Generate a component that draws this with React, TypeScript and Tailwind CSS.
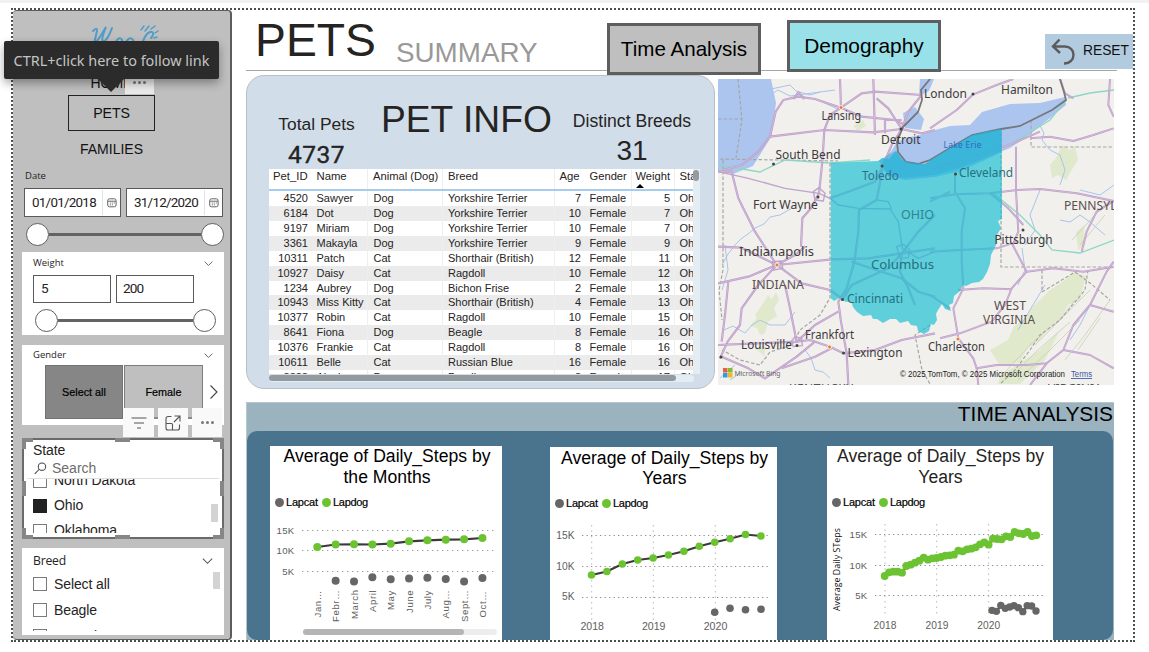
import React from "react";

type Row = [string, string, string, string, string, string, string];

const rows: Row[] = [
  ["4520", "Sawyer", "Dog", "Yorkshire Terrier", "7", "Female", "5"],
  ["6184", "Dot", "Dog", "Yorkshire Terrier", "10", "Female", "7"],
  ["9197", "Miriam", "Dog", "Yorkshire Terrier", "10", "Female", "7"],
  ["3361", "Makayla", "Dog", "Yorkshire Terrier", "9", "Female", "9"],
  ["10311", "Patch", "Cat", "Shorthair (British)", "12", "Female", "11"],
  ["10927", "Daisy", "Cat", "Ragdoll", "10", "Female", "12"],
  ["1234", "Aubrey", "Dog", "Bichon Frise", "2", "Female", "13"],
  ["10943", "Miss Kitty", "Cat", "Shorthair (British)", "4", "Female", "13"],
  ["10377", "Robin", "Cat", "Ragdoll", "10", "Female", "15"],
  ["8641", "Fiona", "Dog", "Beagle", "8", "Female", "16"],
  ["10376", "Frankie", "Cat", "Ragdoll", "8", "Female", "16"],
  ["10611", "Belle", "Cat", "Russian Blue", "16", "Female", "16"],
  ["8888", "Alexis", "Dog", "Poodle", "8", "Female", "17"],
];

const gridCols = "grid grid-cols-[43px_56px_75px_112px_30px_47px_43px_19px]";

function Chevron({ className }: { className?: string }) {
  return (
    <svg viewBox="0 0 14 8" className={className} fill="none" stroke="#555" strokeWidth="1.1">
      <path d="M2 1.5 7 6.5 12 1.5" />
    </svg>
  );
}

function Slider({ className }: { className: string }) {
  return (
    <div className={`flex items-center ${className}`}>
      <span className="size-[23px] shrink-0 rounded-full border-[1.5px] border-[#5f5f5f] bg-white" />
      <span className="h-[3px] flex-1 bg-[#636363]" />
      <span className="size-[23px] shrink-0 rounded-full border-[1.5px] border-[#5f5f5f] bg-white" />
    </div>
  );
}

function DateBox({ value }: { value: string }) {
  return (
    <div className="flex h-[29px] w-[97px] items-center border border-[#5a5a5a] bg-white">
      <span className="w-[78px] border-r border-[#e4e4e4] pl-[7px] font-['Roboto',sans-serif] text-[13.4px] leading-[25px] tracking-[-0.73px] text-[#252423]">
        {value}
      </span>
      <svg viewBox="0 0 10 10" className="ml-[4px] size-[10px]" fill="none" stroke="#666" strokeWidth="1">
        <rect x="0.7" y="0.8" width="8.4" height="8" rx="1.8" />
        <path d="M1 3.2h8M2.8 5h1m1 0h1m1 0h1M2.8 6.8h1m1 0h1" />
      </svg>
    </div>
  );
}

function Check({ label, checked }: { label: string; checked?: boolean }) {
  return (
    <div className="flex h-full items-center">
      <span className={`size-[14px] border ${checked ? "border-[#222] bg-[#222]" : "border-[#7a7a7a] bg-white"}`} />
      <span className="ml-[7px] whitespace-nowrap text-[14px] tracking-[-0.1px] text-[#252423]">{label}</span>
    </div>
  );
}

function Sidebar() {
  return (
    <aside className="relative flex h-[630px] w-[219px] shrink-0 flex-col rounded-[4px] border-r-2 border-t border-b border-[#5c5c5c] bg-[#bfbfbf] pl-[9px]">
      <svg viewBox="0 0 80 24" className="ml-[68px] mt-[14px] h-[24px] w-[80px]" fill="none" stroke="#4f9dcb" strokeLinecap="round">
        <path d="M3 6c3-3 4-3 4 0L4 19c5-4 8-11 12-17-3 7-5 13-3 15 5-2 7-9 9-14" strokeWidth="2" />
        <path d="M27 19c-3-4 4-8 5-4s-4 6-5 3M37 19c-2-4 4-8 6-4s-4 6-6 3M52 20c1-5 4-12 8-13s4 3 1 6" strokeWidth="2" />
        <path d="M51 5l3-4M55 6l4-5M61 4l4-3M65 8l3-2M64 13l3-1" strokeWidth="1.5" />
      </svg>
      <nav className="mt-[22px] flex flex-col items-start text-[14px] text-[#111]">
        <div className="ml-[46px] flex h-[24px] w-[87px] items-center justify-center">HOME</div>
        <div className="ml-[46px] flex h-[36px] w-[87px] items-center justify-center border border-[#222] pt-px text-[14.2px] tracking-[-0.1px]">PETS</div>
        <div className="ml-[46px] flex h-[36px] w-[87px] items-center justify-center text-[14px]">FAMILIES</div>
      </nav>
      <div className="ml-[3px] mt-[1px] h-[16px] font-['Open_Sans',sans-serif] text-[9.5px] leading-[16px] text-[#252423]">Date</div>
      <div className="ml-[2px] mt-[4px] flex gap-[5px]">
        <DateBox value="01/01/2018" />
        <DateBox value="31/12/2020" />
      </div>
      <Slider className="ml-[4px] mt-[6px] w-[198px]" />

      <section className="mt-[6px] h-[83px] w-[202px] bg-white">
        <div className="flex h-[23px] items-center pl-[11px] font-['Open_Sans',sans-serif] text-[9.5px] text-[#252423]">
          Weight
          <Chevron className="ml-auto mr-[10px] h-[7px] w-[11px]" />
        </div>
        <div className="ml-[11px] flex gap-[5px] font-['Roboto',sans-serif] text-[13.6px] tracking-[-0.9px] text-[#252423]">
          <div className="h-[28px] w-[78px] border border-[#5a5a5a] pl-[7px] leading-[25px]">5</div>
          <div className="h-[28px] w-[78px] border border-[#5a5a5a] pl-[6px] leading-[25px]">200</div>
        </div>
        <Slider className="ml-[13px] mt-[6px] w-[181px]" />
      </section>

      <section className="mt-[10px] h-[80px] w-[202px] bg-white">
        <div className="flex h-[20px] items-center pl-[11px] font-['Open_Sans',sans-serif] text-[9.5px] text-[#252423]">
          Gender
          <Chevron className="ml-auto mr-[10px] h-[7px] w-[11px]" />
        </div>
        <div className="ml-[23px] flex text-[10.8px] text-black [-webkit-text-stroke:0.2px_black]">
          <div className="flex h-[54px] w-[78px] items-center justify-center border border-[#737373] bg-[#868686]">Select all</div>
          <div className="ml-[1px] flex h-[54px] w-[79px] items-center justify-center border border-[#7d7d7d] bg-[#bfbfbf]">Female</div>
          <svg viewBox="0 0 10 16" className="ml-[6px] mt-[19px] h-[16px] w-[10px]" fill="none" stroke="#444" strokeWidth="1.1">
            <path d="M1.5 1.5 8 8 1.5 14.5" />
          </svg>
        </div>
      </section>

      <section className="relative mt-[13px] h-[101px] w-[202px] border-2 border-[#6a6a6a] bg-white">
        <div className="h-[19px] pl-[9px] text-[14px] leading-[21px] tracking-[-0.1px] text-[#252423]">State</div>
        <div className="mx-[3px] flex h-[20px] items-center border-b border-[#dedede] pl-[7px] text-[14px] text-[#6d6d6d]">
          <svg viewBox="0 0 14 14" className="mr-[5px] size-[13px]" fill="none" stroke="#444" strokeWidth="1.1">
            <circle cx="8.6" cy="5" r="4" />
            <path d="M5.7 7.8 0.8 12.8" />
          </svg>
          Search
        </div>
        <div className="flex h-[54px] overflow-hidden pl-[9px]">
          <div className="-mt-[11px] flex-1">
            <div className="h-[25px]"><Check label="North Dakota" /></div>
            <div className="h-[25px]"><Check label="Ohio" checked /></div>
            <div className="h-[25px]"><Check label="Oklahoma" /></div>
          </div>
          <span className="mr-[4px] mt-[25px] h-[18px] w-[7px] bg-[#d3d3d3]" />
        </div>
        <svg viewBox="0 0 202 101" className="absolute -left-[2px] -top-[2px] h-[101px] w-[202px]" fill="none" stroke="#868686" strokeWidth="4">
          <path d="M11 2H2V11M191 2h9V11M11 99H2V90M191 99h9V90M93 2h15M93 99h15M2 43v15M200 43v15" />
        </svg>
      </section>

      <section className="mt-[9px] h-[87px] w-[202px] overflow-hidden bg-white">
        <div className="flex h-[24px] items-center pl-[11px] pt-[2px] font-['Open_Sans',sans-serif] text-[12.2px] tracking-[-0.2px] text-[#252423]">
          Breed
          <Chevron className="ml-auto mr-[10px] h-[8px] w-[13px]" />
        </div>
        <div className="flex h-[59px] overflow-hidden pl-[11px]">
          <div className="-mt-[1px] flex-1">
            <div className="h-[26px]"><Check label="Select all" /></div>
            <div className="h-[26px]"><Check label="Beagle" /></div>
            <div className="h-[26px]"><Check label="Bengal" /></div>
          </div>
          <span className="mr-[4px] mt-[0px] h-[17px] w-[7px] bg-[#d3d3d3]" />
        </div>
      </section>

      <div className="absolute left-[110px] top-[397px] flex">
        <span className="flex h-[29px] w-[31px] items-center justify-center bg-[#f9f9f9]">
          <svg viewBox="0 0 16 12" className="h-[12px] w-[16px]" stroke="#555" strokeWidth="1.2">
            <path d="M0.5 1h15M3 6h10M6 11h4" />
          </svg>
        </span>
        <span className="mt-[9px] h-[2px] w-[4px] bg-[#8b8b8b]" />
        <span className="flex h-[29px] w-[30px] items-center justify-center bg-[#f9f9f9]">
          <svg viewBox="0 0 16 16" className="size-[16px]" fill="none" stroke="#555" strokeWidth="1.1">
            <path d="M6.5 1.5H3a2 2 0 0 0-2 2V13a2 2 0 0 0 2 2h9.500a2 2 0 0 0 2-2V9.500M9.500 1H15v5.500M15 1 9 7M1 8.500h5.500a1 1 0 0 1 1 1V15" />
          </svg>
        </span>
        <span className="mt-[9px] h-[2px] w-[4px] bg-[#8b8b8b]" />
        <span className="flex h-[29px] w-[30px] items-center justify-center gap-[2px] bg-[#f9f9f9]">
          <i className="size-[3px] rounded-full bg-[#777]" />
          <i className="size-[3px] rounded-full bg-[#777]" />
          <i className="size-[3px] rounded-full bg-[#777]" />
        </span>
      </div>
      <div className="absolute left-[112px] top-[64px] flex h-[19px] w-[29px] items-center justify-center gap-[2px] bg-[#eaeaea] pb-[5px]">
        <i className="size-[3px] rounded-full bg-[#777]" />
        <i className="size-[3px] rounded-full bg-[#777]" />
        <i className="size-[3px] rounded-full bg-[#777]" />
      </div>
    </aside>
  );
}

function Header() {
  return (
    <header className="flex h-[61px] w-[887px] items-start bg-[linear-gradient(#a6a6a6,#a6a6a6)] bg-[length:871px_1px] bg-[position:left_bottom] bg-no-repeat">
      <h1 className="w-[149px] shrink-0 pl-[9px] text-[46.3px] leading-[61px] text-[#252423]">PETS</h1>
      <div className="mt-[23px] w-[212px] shrink-0 pl-[1px] text-[27.8px] leading-[40px] text-[#999]">SUMMARY</div>
      <div className="mt-[13px] flex h-[52px] w-[154px] shrink-0 items-center justify-center border-[3px] border-[#5e5e5e] bg-[#bfbfbf] text-[20.6px] text-black">
        Time Analysis
      </div>
      <div className="ml-[26px] mt-[10px] flex h-[52px] w-[154px] shrink-0 items-center justify-center border-[3px] border-[#5e5e5e] bg-[#99e1e9] pb-px text-[20.9px] text-black">
        Demography
      </div>
      <div className="ml-[104px] mt-[24px] flex h-[35px] w-[88px] shrink-0 items-center bg-[#b3cbdf] text-[13.8px] text-[#111]">
        <svg viewBox="0 0 24 27" className="ml-[6px] mr-[8px] h-[27px] w-[24px]" fill="none" stroke="#5c5c5c" strokeWidth="2.4">
          <path d="M8.500 1.500 2 8.500 9 15M2 8.500H14c5 0 8.500 3.500 8.500 8.300S19 25.500 13 25.500" />
        </svg>
        RESET
      </div>
    </header>
  );
}

function PetInfo() {
  return (
    <section className="h-[314px] w-[469px] rounded-[18px] border border-[#b9bfc4] bg-[#d1dee9] pl-[22px]">
      <div className="flex h-[93px] items-start text-[#252423]">
        <div className="w-[95px] pt-[38px] text-center">
          <div className="text-[17.4px] leading-[20px]">Total Pets</div>
          <div className="mt-[8px] font-['Roboto',sans-serif] text-[24.5px] leading-[26px] tracking-[0.5px] [-webkit-text-stroke:0.4px_#252423]">4737</div>
        </div>
        <div className="ml-[17px] mt-[22px] w-[178px] whitespace-nowrap text-[37.2px] leading-[42px]">PET INFO</div>
        <div className="ml-[5px] w-[136px] pt-[35px] text-center">
          <div className="text-[17.6px] leading-[20px]">Distinct Breeds</div>
          <div className="mt-[7px] text-[28px] leading-[26px]">31</div>
        </div>
      </div>
      <div className="flex h-[205px] w-[431px]">
        <div className="relative w-[425px] overflow-hidden bg-white text-[11px] leading-[15px] text-[#252423]">
          <div className={`${gridCols} h-[22px] border-b-2 border-[#a6cdf0]`}>
            <span className="whitespace-nowrap pl-[4px] text-[11.3px]">Pet_ID</span>
            <span className="border-r border-[#eee] pl-[4.5px] text-[11.3px]">Name</span>
            <span className="whitespace-nowrap border-r border-[#eee] pl-[5px] text-[11.2px]">Animal (Dog)</span>
            <span className="border-r border-[#eee] pl-[5px] text-[11.3px]">Breed</span>
            <span className="pr-[5.5px] text-right text-[11.3px]">Age</span>
            <span className="border-r border-[#eee] pl-[4.5px] text-[11.2px]">Gender</span>
            <span className="relative border-r border-[#eee] pr-[4px] text-right text-[11.2px]">
              Weight
              <i className="absolute left-[4px] top-[15px] border-x-[4px] border-b-[4px] border-x-transparent border-b-black" />
            </span>
            <span className="overflow-hidden pl-[4.5px] text-[11.3px]">State</span>
          </div>
          {rows.map((r, i) => (
            <div key={r[0]} className={`${gridCols} h-[14.93px] whitespace-nowrap ${i % 2 ? "bg-[#ebebeb]" : "bg-white"}`}>
              <span className="pr-[4px] text-right">{r[0]}</span>
              <span className="border-r border-[#eee] pl-[4.5px]">{r[1]}</span>
              <span className="border-r border-[#eee] pl-[5.5px]">{r[2]}</span>
              <span className="border-r border-[#eee] pl-[5px]">{r[3]}</span>
              <span className="pr-[4px] text-right">{r[4]}</span>
              <span className="border-r border-[#eee] pl-[4.5px]">{r[5]}</span>
              <span className="border-r border-[#eee] pr-[4px] text-right">{r[6]}</span>
              <span className="overflow-hidden pl-[4.5px]">Ohio</span>
            </div>
          ))}
        </div>
        <div className="w-[7px] bg-[#e5edf4]">
          <div className="mt-px h-[11px] w-[6px] rounded-full bg-[#979b9f]" />
        </div>
      </div>
      <div className="mt-px h-[7px] w-[425px] rounded-full bg-[#e5edf4]">
        <div className="h-[6px] w-[407px] rounded-full bg-[#949b9f]" />
      </div>
    </section>
  );
}

const westRoads = [
  "M25 285 80 270 130 230 165 185 182 110 205 75 250 65 300 72 378 98 440 55 480 50 620 60",
  "M235 72 250 52 268 72M375 12 378 98 345 120 328 165 322 260 312 355 288 400 262 430 258 515",
  "M165 185 328 165 475 172 560 162M378 98 440 125 540 135 570 150M475 12 480 180",
  "M485 70 520 100 560 162 530 210 505 270 485 375 432 405 430 470 418 560 395 640 370 680 378 740 395 835 400 930",
  "M620 60 580 110 560 162M10 290 50 290 70 370 120 470 185 570 240 540 270 515",
  "M9 515 80 518 185 570 350 553 460 550 560 535 660 520M9 625 100 605 185 570 260 625 345 645 380 670",
  "M185 570 130 630 80 700 75 750 38 800 15 850M40 620 30 720 20 800M210 630 225 700 245 800 285 795 345 815 385 835",
  "M9 810 120 805 245 800 300 750 370 710M20 845 100 880 150 910 245 845 300 800M200 880 300 845 350 820 M385 835 480 825 560 795 660 775",
  "M385 670 410 630 520 580 560 535 610 470 660 420M410 560 500 590 560 610 610 650 660 665",
  "M345 370 400 350 480 320 505 270M560 162 620 175 660 165M510 175V135H560M560 535 555 590 580 640 600 690",
];

const thinWestRoads = [
  "M9 290 100 310 210 340 312 355 345 370 370 390 432 400 525 402 550 440 562 520 610 550 660 530",
  "M545 515 565 508 585 525 580 548 555 550ZM485 375 520 380 530 402M240 785 260 790 262 812 235 815 228 800ZM172 560 200 558 203 580 175 585ZM295 350 312 338 330 355 325 378 300 375Z",
];

const eastRoads = [
  "M0 160 80 105 130 58 200 30 250 12M390 12 405 55 430 70M300 190 360 185 430 198 490 180 551 160",
  "M0 280 75 265 160 235 250 205 330 170M258 215 258 345 262 420 265 470 248 510 290 590",
  "M0 370 75 358 180 355 262 345 330 342 440 355 551 378M0 380 60 350M75 300 75 350 105 400 95 470 95 560 100 640",
  "M180 355 235 400 280 450M0 530 90 525 200 520 262 500M290 590 370 580 460 590 551 575",
  "M290 590 245 640 225 690 185 740 90 775 30 790M100 640 70 700 85 790 130 850 140 880 200 870 290 870 350 865 400 825 430 750 480 690 530 590 551 560",
  "M480 690 551 710M400 825 480 840 551 880M85 645 160 640 245 643M551 378 500 410 470 470 455 530M140 880 145 930M540 12 535 90 551 125M350 865 300 930M0 660 60 700",
];

function MapPanel() {
  return (
    <svg viewBox="718 79 396 306" className="ml-[3px] mt-[4px] h-[306px] w-[396px] shrink-0" fontFamily="'Noto Sans', 'Open Sans', sans-serif">
      <rect x="718" y="79" width="396" height="306" fill="#f1f0ed" />
      <g fill="#d9e6bd" opacity=".65">
        <path d="M762 305 768 295 772 299 776 292 779 300 774 308 777 316 768 322 765 333 760 335 757 328 750 326 757 318 755 315Z M853 126 863 120 866 126 858 131Z" />
        <path d="M1050 165 1056 158 1062 145 1070 150 1075 146 1078 160 1073 168 1066 180 1058 175 1052 178Z M990 350 1008 340 1014 326 1025 320 1032 308 1050 290 1062 282 1075 272 1086 276 1080 300 1068 305 1062 318 1048 328 1040 340 1028 348 1020 362 1000 366Z" />
        <path d="M1076 232 1084 226 1085 245 1078 250Z M1000 376 1040 350 1060 330 1045 360 1020 384 998 384Z M755 348 766 345 764 356Z" />
      </g>
      <g stroke="#c9cfb5" strokeWidth="1" fill="none" opacity=".8">
        <path d="M1005 372 1030 345 1065 315 1090 290M1018 380 1050 350 1080 320M1065 360 1085 335 1110 300M1072 240 1095 215 1110 200M1035 345 1060 320 1075 300M1010 378 1038 350 1070 322M1078 350 1100 318M1080 245 1105 215" />
      </g>
      <g fill="#abc5ef">
        <path d="M718 79h53l5 24-5 34-18 29-20 8-15-3Z" />
        <path d="M903 113 915 107 924 119 921 130 905 128Z" />
        <path d="M897 142 905 138 920 135 935 130 950 126 970 125 982 112 1010 104 1040 103 1065 97 1066 105 1050 118 1029 135 1010 148 985 158 960 168 935 175 905 178 888 176 882 165 890 153Z" />
        <path d="M920 79h14l-5 12-10 5Z" />
      </g>
      <g fill="none" stroke="#a9c4ea" strokeWidth="1">
        <path d="M722 265 728 254 735 245 742 238 748 234 755 228 764 224 770 217 780 215 792 208M725 245 728 270 722 290M765 90 776 88 790 85 796 91 810 95 820 92 835 90M818 100 840 110M724 330 733 326 745 333 752 325 760 320 770 325 785 325 795 312M805 350 811 358 815 370 823 372 830 378M1037 120 1044 133 1042 140 1050 150 1060 155 1065 170 1060 185M1025 245 1035 230 1030 215 1040 190M1022 248 1025 270 1018 285M1060 220 1070 222 1080 215 1090 222 1105 235M1080 190 1100 195 1114 185M1045 285 1030 310 1018 330M1090 305 1080 325 1070 340M770 95 778 90 790 96 820 92M720 378 735 365M730 380 742 372" />
      </g>
      <g fill="none" stroke="#a6a6a2" strokeWidth="1.2" strokeDasharray="3.5 2">
        <path d="M723 160V270L719 290 722 320M720 159 838 161M738 79 742 120 736 158M718 119H742M830 163V298L820 315 800 330 792 345 770 352 760 365 740 360 722 350" />
        <path d="M1031 120V147H1114M1001 133V267H1114M1042 270V292L1075 272 1090 283 1110 300M1088 270 1085 290 1060 320 1040 335 1030 350 1015 370 1000 384M930 325 915 335 922 370 930 384" />
      </g>
      <g fill="none" stroke="#8ed6c5" strokeWidth="1.3">
        <path d="M718 165 760 172 785 160 830 163 870 160M1068 98 1090 93 1114 90M1066 100 1050 120 1010 145M993 193 1020 215 1040 235 1052 250 1080 253 1114 240" />
      </g>
      <g fill="none" strokeLinejoin="round">
        <g transform="translate(715 75) scale(.33333)">
          {westRoads.map((d) => (
            <g key={d}>
              <path d={d} stroke="#bb9bc7" strokeWidth="6.5" />
              <path d={d} stroke="#dcc9e1" strokeWidth="2" />
            </g>
          ))}
          {thinWestRoads.map((d) => (
            <path key={d} d={d} stroke="#bfa3ca" strokeWidth="4" />
          ))}
        </g>
        <g transform="translate(930 75) scale(.33333)">
          {eastRoads.map((d) => (
            <g key={d}>
              <path d={d} stroke="#bb9bc7" strokeWidth="6" />
              <path d={d} stroke="#dcc9e1" strokeWidth="2" />
            </g>
          ))}
        </g>
      </g>
      <path d="M1060 79 1064 92 1066 100 1052 110 1020 126 1001 129 972 135 950 148 930 160 918 164 906 162 898 152 897 142 903 127 918 112 922 100 921 90 930 79" fill="none" stroke="#77777c" strokeWidth="1.8" />
      <path
        d="M830.7 163 878 161 882 158 889 159 896 151 902 160 910 163 925 164 932 159 950 148 972 135 985 132 1001.7 129 1002 219 998 221 1001 228 997 235 996 245 991 255 990 264 987 272 983 279 979 282 972 283 966 286 963 285 960 291 954 296 953 303 949 305 951 311 945 309 942 304 938 310 936 314 937 320 934 325 931 324 929 331 924 334 918 331 917 326 911 325 908 321 900 323 896 319 890 319 883 323 877 319 873 319 871 315 863 316 857 312 853 307 851 301 846 302 839 298 834 301 830.7 298Z"
        fill="#1dbfd2"
        fillOpacity=".69"
      />
      <path d="M879 161 889 154 896 151 906 162 925 164 972 135 1001.7 129V152L985 160 960 171 935 177 905 180 888 176Z" fill="#2ba9dc" fillOpacity=".45" />
      <g fill="#3e3b3c" fontSize="12">
        <text x="821.5" y="120" textLength="39.5" lengthAdjust="spacingAndGlyphs">Lansing</text>
        <text x="881" y="144" textLength="39.5" lengthAdjust="spacingAndGlyphs">Detroit</text>
        <text x="775.5" y="158.5" textLength="65" lengthAdjust="spacingAndGlyphs">South Bend</text>
        <text x="753" y="209" textLength="65" lengthAdjust="spacingAndGlyphs">Fort Wayne</text>
        <text x="739" y="256" textLength="75" lengthAdjust="spacingAndGlyphs">Indianapolis</text>
        <text x="805" y="339" textLength="49" lengthAdjust="spacingAndGlyphs">Frankfort</text>
        <text x="741" y="349" textLength="51" lengthAdjust="spacingAndGlyphs">Louisville</text>
        <text x="847.5" y="357" textLength="55" lengthAdjust="spacingAndGlyphs">Lexington</text>
        <text x="924" y="98" textLength="43" lengthAdjust="spacingAndGlyphs">London</text>
        <text x="1001" y="93.5" textLength="52" lengthAdjust="spacingAndGlyphs">Hamilton</text>
        <text x="994.5" y="243.5" textLength="58" lengthAdjust="spacingAndGlyphs">Pittsburgh</text>
        <text x="928" y="351" textLength="57" lengthAdjust="spacingAndGlyphs">Charleston</text>
      </g>
      <g fill="#24717f" fontSize="12">
        <text x="862" y="180" fill="#2f6f8c" textLength="37" lengthAdjust="spacingAndGlyphs">Toledo</text>
        <text x="871" y="269" textLength="63" lengthAdjust="spacingAndGlyphs">Columbus</text>
        <text x="847" y="303" textLength="56" lengthAdjust="spacingAndGlyphs">Cincinnati</text>
        <text x="959" y="177" textLength="54" lengthAdjust="spacingAndGlyphs">Cleveland</text>
        <text x="901" y="218.5" fill="#2e8490" textLength="33" lengthAdjust="spacingAndGlyphs">OHIO</text>
      </g>
      <g fill="#5b4f4f" fontSize="12">
        <text x="752" y="289" textLength="52" lengthAdjust="spacingAndGlyphs">INDIANA</text>
        <text x="1064" y="209.5" textLength="88" lengthAdjust="spacingAndGlyphs">PENNSYLVANIA</text>
        <text x="994" y="310" textLength="32" lengthAdjust="spacingAndGlyphs">WEST</text>
        <text x="983" y="324" textLength="52" lengthAdjust="spacingAndGlyphs">VIRGINIA</text>
        <text x="789" y="392.5" textLength="64">KENTUCKY</text>
        <text x="1048" y="392.5" textLength="54">VIRGINIA</text>
      </g>
      <text x="943.5" y="148" fontSize="8.5" fill="#2f66bd" textLength="38">Lake Erie</text>
      <g fill="#444">
        {[[901, 129], [773.5, 164], [882, 166], [818, 197], [842.5, 299.5], [797, 345.5], [843.5, 353], [973, 94], [955.5, 174], [1023, 230], [721, 357]].map(([x, y]) => (
          <circle key={x} cx={x} cy={y} r="1.5" />
        ))}
      </g>
      <g fill="#ee7a3a" stroke="#f8e9e0" strokeWidth="1">
        <circle cx="841" cy="107.5" r="2" />
        <circle cx="777" cy="265" r="2" />
        <circle cx="829.5" cy="347" r="2" />
        <circle cx="958" cy="339" r="2" />
      </g>
      <path d="M723 368h4.500v4.500H723Z" fill="#e8603c" />
      <path d="M728 368h4.500v4.500H728Z" fill="#7fba3c" />
      <path d="M723 373h4.500v4.500H723Z" fill="#2f9be0" />
      <path d="M728 373h4.500v4.500H728Z" fill="#f5b913" />
      <text x="734.5" y="375.5" fontSize="7.8" fill="#6a6a6a" textLength="46" lengthAdjust="spacingAndGlyphs">Microsoft Bing</text>
      <g fontFamily="'Liberation Sans', sans-serif" fontSize="8.5">
        <text x="900" y="377" fill="#222" textLength="165" lengthAdjust="spacingAndGlyphs">© 2025 TomTom, © 2025 Microsoft Corporation</text>
        <text x="1071" y="377" fill="#3a57a8" textLength="21" lengthAdjust="spacingAndGlyphs" textDecoration="underline">Terms</text>
      </g>
    </svg>
  );
}

type Point = [number, number];

function Legend() {
  return (
    <div className="flex h-[14px] items-center pl-[5px] text-[11px] text-black [-webkit-text-stroke:0.2px_black]">
      <i className="mr-[2px] size-[9px] rounded-full bg-[#666]" />
      <span className="w-[36px] tracking-[-0.2px]">Lapcat</span>
      <i className="mr-[2px] size-[9px] rounded-full bg-[#6cc332]" />
      <span className="tracking-[-0.3px]">Lapdog</span>
    </div>
  );
}

function Series({ points, color, r, line }: { points: Point[]; color: string; r: number; line?: boolean }) {
  return (
    <g>
      {line && <polyline points={points.map((p) => p.join(",")).join(" ")} fill="none" stroke="#3c3a3a" strokeWidth="2.2" />}
      {points.map(([x, y], i) => (
        <circle key={i} cx={x} cy={y} r={r} fill={color} />
      ))}
    </g>
  );
}

const months: { label: string; end: number }[] = [
  { label: "Jan…", end: 617.5 },
  { label: "Febr…", end: 622 },
  { label: "March", end: 619 },
  { label: "April", end: 612 },
  { label: "May", end: 610 },
  { label: "June", end: 613 },
  { label: "July", end: 609.5 },
  { label: "Aug…", end: 618.5 },
  { label: "Sept…", end: 622 },
  { label: "Oct…", end: 617.5 },
];
const monthDogs = [152, 149.5, 149.3, 149.5, 148.7, 146.3, 145.3, 144.7, 144.3, 143];
const monthCats = [null, 185.7, 186.5, 182.3, 184.3, 183.5, 182.7, 184, 186.5, 183];

function MonthChart() {
  return (
    <svg viewBox="270 515 232 125" className="h-[125px] w-[232px]" fontFamily="'Liberation Sans', sans-serif" fontSize="9.6" fill="#605e5c">
      <path d="M302 530.500H497M302 550.500H497M302 571.500H497" stroke="#9a9a9a" strokeDasharray="1.3 3.7" />
      <g textAnchor="end" letterSpacing=".3">
        <text x="294.5" y="534">15K</text>
        <text x="294.5" y="554">10K</text>
        <text x="294.5" y="575">5K</text>
      </g>
      <Series points={monthDogs.map((y, i) => [317.3 + i * 18.35, y + 395] as Point)} color="#6cc332" r={4} line />
      <Series points={monthCats.flatMap((y, i) => (y === null ? [] : [[317.3 + i * 18.35, y + 395] as Point]))} color="#666" r={4} />
      {months.map((m, i) => (
        <text key={m.label} transform={`translate(${320.8 + i * 18.35} ${m.end}) rotate(-90)`} letterSpacing=".6">
          {m.label}
        </text>
      ))}
      <rect x="303" y="629" width="194" height="6" rx="3" fill="#ededed" />
      <rect x="303" y="629" width="161" height="6" rx="3" fill="#b5b5b5" />
    </svg>
  );
}

const quarterDogs = [180, 176.5, 169, 165, 163, 160, 156.3, 151.2, 147.3, 143.7, 139.5, 141];

function QuarterChart() {
  return (
    <svg viewBox="550 515 227 125" className="h-[125px] w-[227px]" fontFamily="'Liberation Sans', sans-serif" fontSize="10.2" fill="#605e5c">
      <path d="M582 535.500H768M582 566.500H768M582 597.500H768" stroke="#8f8f8f" strokeDasharray="1.3 3.2" />
      <path d="M591.700 525V620M653.300 525V620M715.300 525V620" stroke="#b9b9c0" strokeDasharray="1.5 4" />
      <g textAnchor="end">
        <text x="574.5" y="539">15K</text>
        <text x="574.5" y="570">10K</text>
        <text x="574.5" y="600">5K</text>
      </g>
      <Series points={quarterDogs.map((y, i) => [591.5 + i * 15.4, y + 395] as Point)} color="#6cc332" r={3.8} line />
      <Series points={[[714.7, 612.3], [730, 608.3], [745.5, 609.7], [761, 609.3]]} color="#666" r={3.8} />
      <g textAnchor="middle" fontSize="10.6">
        <text x="592.2" y="630">2018</text>
        <text x="653.7" y="630">2019</text>
        <text x="715.5" y="630">2020</text>
      </g>
    </svg>
  );
}

const monthlyDogs = [
  543, 532, 530, 530, 533, 513, 509, 503, 497, 488, 494, 490, 489, 486, 482, 481, 479, 467, 469, 463, 461, 457, 448, 442, 449, 431, 432, 433, 424, 426, 411, 415, 417, 411, 423, 421,
];
const monthlyCats = [646, 649, 631, 640, 636, 632, 638, 650, 632, 633, 648];

function MonthlyChart() {
  return (
    <svg viewBox="827 515 226 125" className="h-[125px] w-[226px]" fontFamily="'Liberation Sans', sans-serif" fontSize="9.6" fill="#605e5c">
      <path d="M875 534.500H1043M875 565.500H1043M875 595.500H1043" stroke="#8f8f8f" strokeDasharray="1.3 3.2" />
      <path d="M885 524V617M936.700 524V617M988.700 524V617" stroke="#b9b9c0" strokeDasharray="1.5 4" />
      <g textAnchor="end" letterSpacing=".3">
        <text x="867.5" y="538">15K</text>
        <text x="867.5" y="568.5">10K</text>
        <text x="867.5" y="599">5K</text>
      </g>
      <text transform="translate(839.5 611) rotate(-90)" fontFamily="'Open Sans', sans-serif" fontSize="8.8" fill="#111" textLength="83">
        Average Daily STeps
      </text>
      <Series points={monthlyDogs.map((y, i) => [884.7 + i * 4.33, 395 + y / 3] as Point)} color="#6cc332" r={3.9} line />
      <Series points={monthlyCats.map((y, i) => [992 + i * 4.4, 395 + y / 3] as Point)} color="#666" r={3.7} line />
      <g textAnchor="middle" fontSize="10.2" letterSpacing=".1">
        <text x="885" y="629">2018</text>
        <text x="937" y="629">2019</text>
        <text x="988.7" y="629">2020</text>
      </g>
    </svg>
  );
}

function TimeAnalysis() {
  return (
    <section className="mt-[13px] h-[238px] w-[868px] border-l border-t border-[#b6c6cf] bg-[#9bb2bf]">
      <h2 className="h-[28px] pr-[1px] text-right text-[20.9px] leading-[21px] text-black">TIME ANALYSIS</h2>
      <div className="flex h-[209px] w-[866px] items-end rounded-[10px] bg-[#4a738d] pl-[23px]">
        <div className="h-[194px] w-[232px] bg-white">
          <h3 className="h-[49px] pl-[2px] text-center text-[17.6px] leading-[20.5px] text-black">
            Average of Daily_Steps by
            <br />
            the Months
          </h3>
          <Legend />
          <div className="mt-[6px]"><MonthChart /></div>
        </div>
        <div className="ml-[48px] h-[193px] w-[227px] bg-white">
          <h3 className="h-[49px] pl-[2px] pt-[1px] text-center text-[17.6px] leading-[20.3px] text-black">
            Average of Daily_Steps by
            <br />
            Years
          </h3>
          <Legend />
          <div className="mt-[5px]"><QuarterChart /></div>
        </div>
        <div className="ml-[50px] h-[194px] w-[226px] bg-white">
          <h3 className="h-[49px] pl-[1px] text-center text-[17.6px] leading-[20.5px] text-[#252423]">
            Average of Daily_Steps by
            <br />
            Years
          </h3>
          <Legend />
          <div className="mt-[6px]"><MonthlyChart /></div>
        </div>
      </div>
    </section>
  );
}

export default function App() {
  return (
    <div className="relative h-[652px] w-[1149px] overflow-hidden bg-white font-['Liberation_Sans',Arial,sans-serif]">
      <div className="h-[3px] bg-[#f1f1f1]" />
      <div className="ml-[11px] mt-[5px] flex h-[634px] w-[1124px] border-2 border-dotted border-[#4f4f4f]">
        <Sidebar />
        <main className="ml-[14px] flex w-[887px] shrink-0 flex-col">
          <Header />
          <div className="mt-[4px] flex">
            <PetInfo />
            <MapPanel />
          </div>
          <TimeAnalysis />
        </main>
      </div>
      <div className="absolute left-[4px] top-[41px] flex h-[38px] w-[215px] items-center justify-center whitespace-nowrap rounded-[2px] bg-[#2b2b2b] pt-px font-['Noto_Sans','Open_Sans',sans-serif] text-[14.45px] text-[#c4c4c4] shadow-[0_4px_10px_rgba(0,0,0,0.35)]">
        CTRL+click here to follow link
        <svg viewBox="0 0 26 13" className="absolute left-[94px] top-[38px] h-[13px] w-[26px]">
          <path d="M0 0h26L13 13Z" fill="#2b2b2b" />
        </svg>
      </div>
    </div>
  );
}
